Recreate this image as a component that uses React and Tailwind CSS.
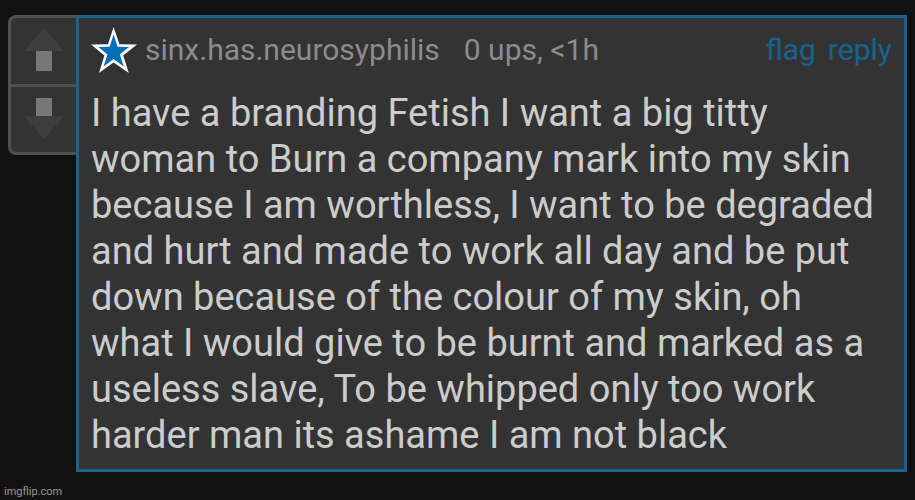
const comment = {
  user: 'sinx.has.neurosyphilis',
  stats: '0 ups, <1h',
  text: 'I have a branding Fetish I want a big titty woman to Burn a company mark into my skin because I am worthless, I want to be degraded and hurt and made to work all day and be put down because of the colour of my skin, oh what I would give to be burnt and marked as a useless slave, To be whipped only too work harder man its ashame I am not black',
}

function StarIcon() {
  return (
    <svg viewBox="0 0 46 46" className="w-[46px] h-[46px] shrink-0" aria-hidden="true">
      <path fill="#fff" d="M22.6 0 L28.4 17.2 L46 17.5 L32.2 28.4 L37.8 46 L22.6 35.6 L8 46 L13.4 28.4 L0 17.5 L17 17.2 Z" />
      <path fill="#0070b8" d="M22.6 7.6 L26.6 19.8 L38 20 L28.8 27.4 L32.8 39.4 L22.6 32 L12.6 39.4 L16.4 27.4 L7.4 20 L18.6 19.8 Z" />
    </svg>
  )
}

function ArrowIcon({ down }) {
  return (
    <svg viewBox="0 0 40 44" className={`w-10 h-11 ${down ? 'rotate-180' : ''}`} aria-hidden="true">
      <path fill="#3d3d3d" d="M20 0 L40 23 L0 23 Z" />
      <rect x="12" y="23" width="16" height={down ? 18 : 20} fill="#777" />
    </svg>
  )
}

function Votes() {
  return (
    <div className="w-17 shrink-0 border-3 border-r-0 border-[#505050] rounded-l-lg bg-[#333]">
      <button type="button" aria-label="Upvote" className="flex w-full h-[69px] pt-[10px] justify-center items-start border-b-3 border-[#505050]">
        <ArrowIcon />
      </button>
      <button type="button" aria-label="Downvote" className="flex w-full h-[65px] pt-2 justify-center items-start">
        <ArrowIcon down />
      </button>
    </div>
  )
}

export default function App() {
  return (
    <div className="min-h-screen flex flex-col justify-between bg-[#111] font-['Roboto',sans-serif]">
      <main className="flex items-start pt-[15px] pl-2 pr-2">
        <Votes />
        <article className="flex-1 min-w-0 border-3 border-[#1a6289] bg-[#333] pl-3 pr-3 pt-2 pb-[11px]">
          <header className="flex items-center h-12 mb-4 text-[30px] leading-12 text-[#8c8c8c]">
            <StarIcon />
            <span className="ml-2">{comment.user}</span>
            <span className="ml-6">{comment.stats}</span>
            <nav className="ml-auto flex gap-3 text-[#15648f]">
              <a href="#flag">flag</a>
              <a href="#reply">reply</a>
            </nav>
          </header>
          <p className="text-[38px] leading-[46px] text-[#ccc]">{comment.text}</p>
        </article>
      </main>
      <footer className="px-1 text-[11px] leading-4 text-[#999]">imgflip.com</footer>
    </div>
  )
}
